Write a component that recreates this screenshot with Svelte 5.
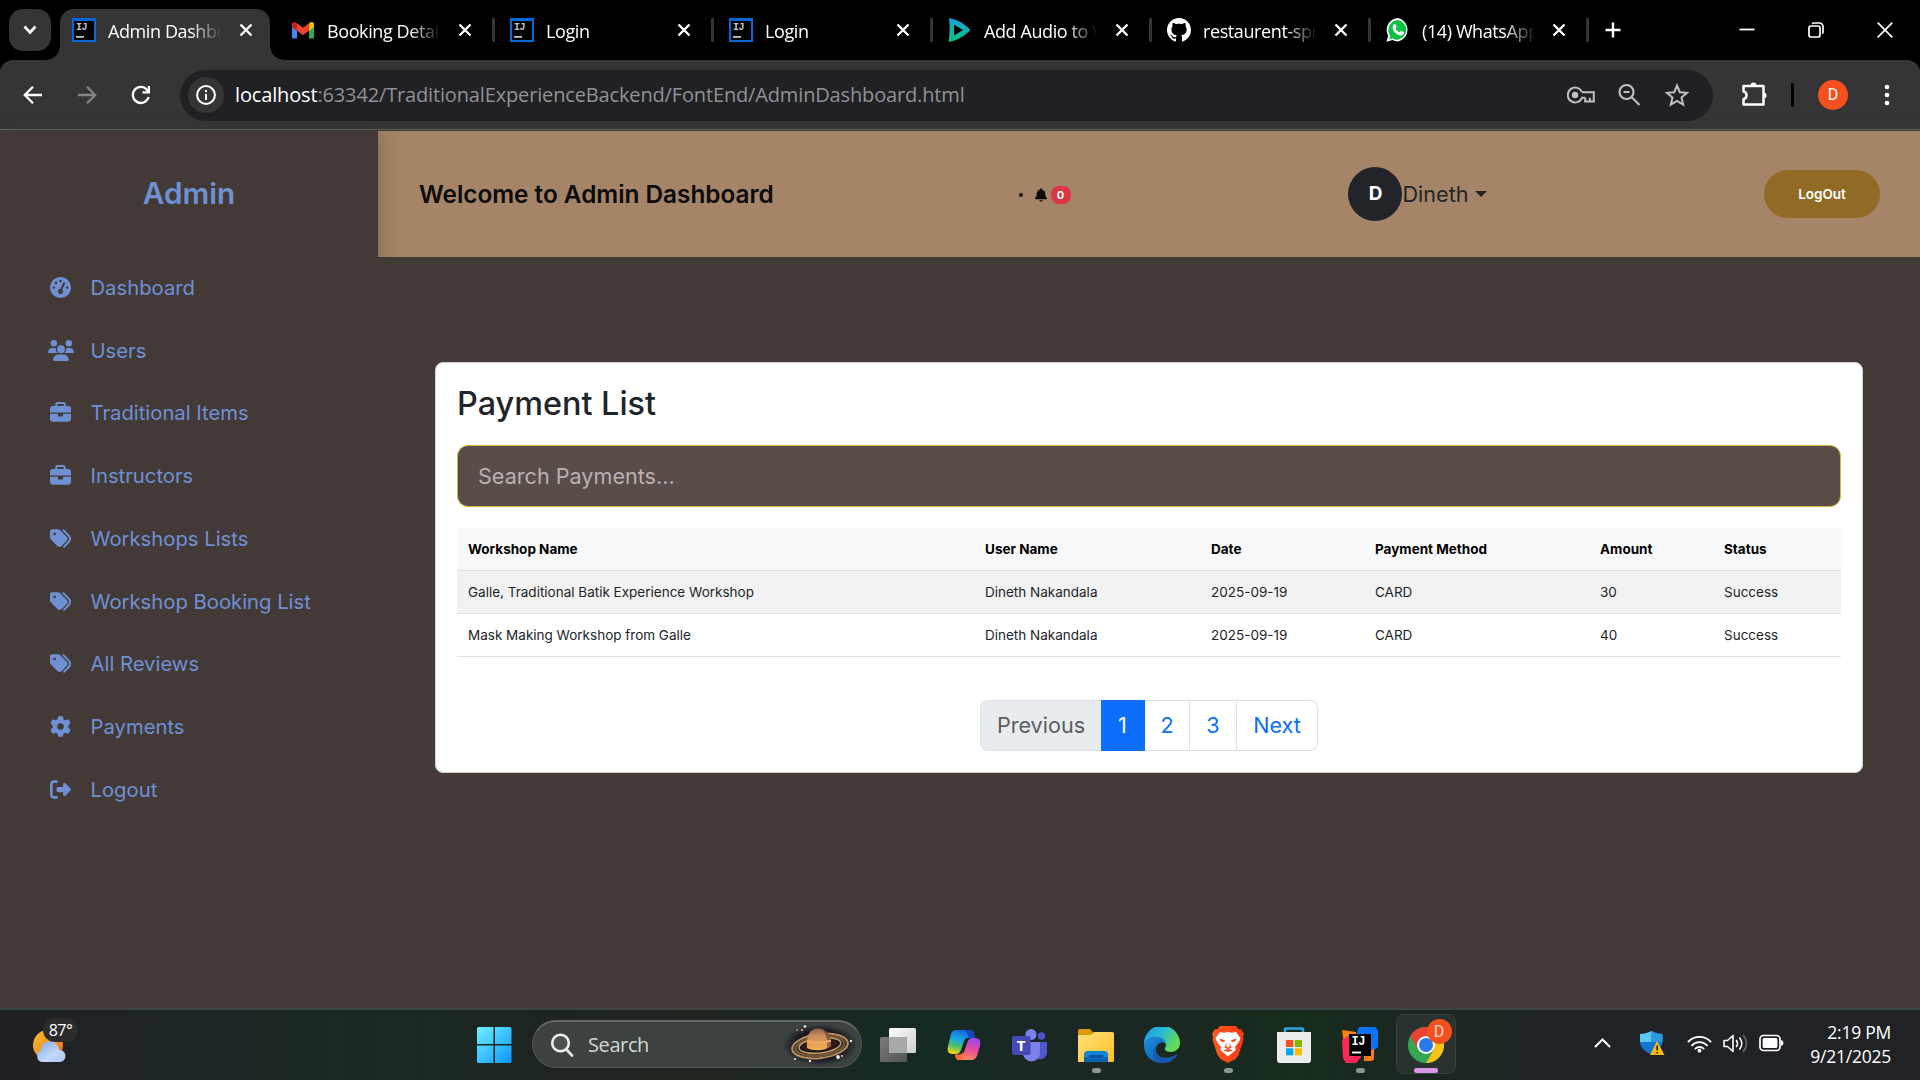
<script>
  const tabs = [
    { icon: 'ij', title: 'Admin Dashbo', active: true },
    { icon: 'gmail', title: 'Booking Detail' },
    { icon: 'ij', title: 'Login' },
    { icon: 'ij', title: 'Login' },
    { icon: 'play', title: 'Add Audio to V' },
    { icon: 'github', title: 'restaurent-spr' },
    { icon: 'whatsapp', title: '(14) WhatsApp' }
  ];

  const gauge = 'M0 256a256 256 0 1 1 512 0A256 256 0 1 1 0 256zM288 96a32 32 0 1 0 -64 0 32 32 0 1 0 64 0zM256 416c35.3 0 64-28.7 64-64c0-17.4-6.9-33.1-18.1-44.6L366 161.7c5.3-12.1-.2-26.3-12.3-31.6s-26.3 .2-31.6 12.3L257.9 288c-.6 0-1.3 0-1.9 0c-35.3 0-64 28.7-64 64s28.7 64 64 64zM176 144a32 32 0 1 0 -64 0 32 32 0 1 0 64 0zM96 288a32 32 0 1 0 0-64 32 32 0 1 0 0 64zm352-32a32 32 0 1 0 -64 0 32 32 0 1 0 64 0z';
  const users = 'M144 0a80 80 0 1 1 0 160A80 80 0 1 1 144 0zM512 0a80 80 0 1 1 0 160A80 80 0 1 1 512 0zM0 298.7C0 239.8 47.8 192 106.7 192h42.7c15.9 0 31 3.5 44.6 9.7c-1.3 7.2-1.9 14.7-1.9 22.3c0 38.2 16.8 72.5 43.3 96c-.2 0-.4 0-.7 0H21.3C9.6 320 0 310.4 0 298.7zM405.3 320c-.2 0-.4 0-.7 0c26.6-23.5 43.3-57.8 43.3-96c0-7.6-.7-15-1.9-22.3c13.6-6.3 28.7-9.7 44.6-9.7h42.7C592.2 192 640 239.8 640 298.7c0 11.8-9.6 21.3-21.3 21.3H405.3zM224 224a96 96 0 1 1 192 0 96 96 0 1 1 -192 0zM128 485.3C128 411.7 187.7 352 261.3 352H378.7C452.3 352 512 411.7 512 485.3c0 14.7-11.9 26.7-26.7 26.7H154.7c-14.7 0-26.7-11.9-26.7-26.7z';
  const briefcase = 'M184 48H328c4.4 0 8 3.6 8 8V96H176V56c0-4.4 3.6-8 8-8zm-56 8V96H64C28.7 96 0 124.7 0 160v96H192 320 512V160c0-35.3-28.7-64-64-64H384V56c0-30.9-25.1-56-56-56H184c-30.9 0-56 25.1-56 56zM512 288H320v32c0 17.7-14.3 32-32 32H224c-17.7 0-32-14.3-32-32V288H0V416c0 35.3 28.7 64 64 64H448c35.3 0 64-28.7 64-64V288z';
  const tags = 'M345 39.1L472.8 168.4c52.4 53 52.4 138.2 0 191.2L360.8 472.9c-9.3 9.4-24.5 9.5-33.9 .2s-9.5-24.5-.2-33.9L438.6 325.9c33.9-34.3 33.9-89.4 0-123.7L310.9 72.9c-9.3-9.4-9.2-24.6 .2-33.9s24.6-9.2 33.9 .2zM0 229.5V80C0 53.5 21.5 32 48 32H197.5c17 0 33.3 6.7 45.3 18.7l168 168c25 25 25 65.5 0 90.5L277.3 442.7c-25 25-65.5 25-90.5 0l-168-168C6.7 262.7 0 246.5 0 229.5zM144 144a32 32 0 1 0 -64 0 32 32 0 1 0 64 0z';
  const gear = 'M495.9 166.6c3.2 8.7 .5 18.4-6.4 24.6l-43.3 39.4c1.1 8.3 1.7 16.8 1.7 25.4s-.6 17.1-1.7 25.4l43.3 39.4c6.9 6.2 9.6 15.9 6.4 24.6c-4.4 11.9-9.7 23.3-15.8 34.3l-4.7 8.1c-6.6 11-14 21.4-22.1 31.2c-5.9 7.2-15.7 9.6-24.5 6.8l-55.7-17.7c-13.4 10.3-28.2 18.9-44 25.4l-12.5 57.1c-2 9.1-9 16.3-18.2 17.8c-13.8 2.3-28 3.5-42.5 3.5s-28.7-1.2-42.5-3.5c-9.2-1.5-16.2-8.7-18.2-17.8l-12.5-57.1c-15.8-6.5-30.6-15.1-44-25.4L83.1 425.9c-8.8 2.8-18.6 .3-24.5-6.8c-8.1-9.8-15.5-20.2-22.1-31.2l-4.7-8.1c-6.1-11-11.4-22.4-15.8-34.3c-3.2-8.7-.5-18.4 6.4-24.6l43.3-39.4C64.6 273.1 64 264.6 64 256s.6-17.1 1.7-25.4L22.4 191.2c-6.9-6.2-9.6-15.9-6.4-24.6c4.4-11.9 9.7-23.3 15.8-34.3l4.7-8.1c6.6-11 14-21.4 22.1-31.2c5.9-7.2 15.7-9.6 24.5-6.8l55.7 17.7c13.4-10.3 28.2-18.9 44-25.4l12.5-57.1c2-9.1 9-16.3 18.2-17.8C227.3 1.2 241.5 0 256 0s28.7 1.2 42.5 3.5c9.2 1.5 16.2 8.7 18.2 17.8l12.5 57.1c15.8 6.5 30.6 15.1 44 25.4l55.7-17.7c8.8-2.8 18.6-.3 24.5 6.8c8.1 9.8 15.5 20.2 22.1 31.2l4.7 8.1c6.1 11 11.4 22.4 15.8 34.3zM256 336a80 80 0 1 0 0-160 80 80 0 1 0 0 160z';
  const exit = 'M377.9 105.9L500.7 228.7c7.2 7.2 11.3 17.1 11.3 27.3s-4.1 20.1-11.3 27.3L377.9 406.1c-6.4 6.4-15 9.9-24 9.9c-18.7 0-33.9-15.2-33.9-33.9l0-62.1-128 0c-17.7 0-32-14.3-32-32l0-64c0-17.7 14.3-32 32-32l128 0 0-62.1c0-18.7 15.2-33.9 33.9-33.9c9 0 17.6 3.6 24 9.9zM160 96L96 96c-17.7 0-32 14.3-32 32l0 256c0 17.7 14.3 32 32 32l64 0c17.7 0 32 14.3 32 32s-14.3 32-32 32l-64 0c-53 0-96-43-96-96L0 128C0 75 43 32 96 32l64 0c17.7 0 32 14.3 32 32s-14.3 32-32 32z';
  const bell = 'M224 0c-17.7 0-32 14.3-32 32V51.2C119 66 64 130.6 64 208v18.8c0 47-17.3 92.4-48.5 127.6l-7.4 8.3c-8.4 9.4-10.4 22.9-5.3 34.4S19.4 416 32 416H416c12.6 0 24-7.4 29.2-18.9s3.1-25-5.3-34.4l-7.4-8.3C401.3 319.2 384 273.9 384 226.8V208c0-77.4-55-142-128-156.8V32c0-17.7-14.3-32-32-32zm45.3 493.3c12-12 18.7-28.3 18.7-45.3H224 160c0 17 6.7 33.3 18.7 45.3s28.3 18.7 45.3 18.7s33.3-6.7 45.3-18.7z';
  const octocat = 'M8 0C3.58 0 0 3.58 0 8c0 3.54 2.29 6.53 5.47 7.59.4.07.55-.17.55-.38 0-.19-.01-.82-.01-1.49-2.01.37-2.53-.49-2.69-.94-.09-.23-.48-.94-.82-1.13-.28-.15-.68-.52-.01-.53.63-.01 1.08.58 1.23.82.72 1.21 1.87.87 2.33.66.07-.52.28-.87.51-1.07-1.78-.2-3.64-.89-3.64-3.95 0-.87.31-1.59.82-2.15-.08-.2-.36-1.02.08-2.12 0 0 .67-.21 2.2.82.64-.18 1.32-.27 2-.27s1.36.09 2 .27c1.53-1.04 2.2-.82 2.2-.82.44 1.1.16 1.92.08 2.12.51.56.82 1.27.82 2.15 0 3.07-1.87 3.75-3.65 3.95.29.25.54.73.54 1.48 0 1.07-.01 1.93-.01 2.2 0 .21.15.46.55.38A8.01 8.01 0 0 0 16 8c0-4.42-3.58-8-8-8z';

  const menu = [
    { label: 'Dashboard', path: gauge },
    { label: 'Users', path: users, wide: true },
    { label: 'Traditional Items', path: briefcase },
    { label: 'Instructors', path: briefcase },
    { label: 'Workshops Lists', path: tags },
    { label: 'Workshop Booking List', path: tags },
    { label: 'All Reviews', path: tags },
    { label: 'Payments', path: gear },
    { label: 'Logout', path: exit }
  ];

  const columns = ['Workshop Name', 'User Name', 'Date', 'Payment Method', 'Amount', 'Status'];
  const payments = [
    ['Galle, Traditional Batik Experience Workshop', 'Dineth Nakandala', '2025-09-19', 'CARD', '30', 'Success'],
    ['Mask Making Workshop from Galle', 'Dineth Nakandala', '2025-09-19', 'CARD', '40', 'Success']
  ];
</script>

<div class="screen">
  <div class="tabstrip">
    <button class="tabsearch" aria-label="Search tabs">
      <svg width="14" height="10" viewBox="0 0 14 10"><path d="M1.5 1.5 7 7.5l5.500-6" fill="none" stroke="#fff" stroke-width="2.600" /></svg>
    </button>
    {#each tabs as tab}
      <div class="tab" class:active={tab.active}>
        <svg class="favicon" width="24" height="24" viewBox="0 0 24 24">
          {#if tab.icon === 'ij'}
            <rect width="24" height="24" fill="#0a67d6" />
            <rect x="2" y="3" width="20" height="19" fill="#000" />
            <text x="4" y="11.500" class="mono" font-size="10">IJ</text>
            <rect x="4" y="18" width="8" height="1.800" fill="#c4c4c4" />
          {:else if tab.icon === 'gmail'}
            <path d="M1 7v12.500Q1 20.500 2 20.500h4V10z" fill="#4285f4" />
            <path d="M23 7v12.500q0 1-1 1h-4V10z" fill="#34a853" />
            <path d="M18 6v7l5-4V6.500C23 3.700 20 3.500 18.500 4.700z" fill="#fbbc04" />
            <path d="M6 6v7L1 9V6.500C1 3.700 4 3.500 5.500 4.700z" fill="#c5221f" />
            <path d="M6 5.200 12 9.700l6-4.500v7.600L12 17.300 6 12.800z" fill="#ea4335" />
          {:else if tab.icon === 'play'}
            <defs><linearGradient id="clip" x1="0" y1="0" x2="0" y2="1"><stop offset="0" stop-color="#16a5dc" /><stop offset="1" stop-color="#06c281" /></linearGradient></defs>
            <path fill-rule="evenodd" d="M1.200 1C.5 .2 1 0 2 .3 10 2 16.500 6 21.500 11c.8.8.8 1.300 0 2C16 18 10 22 2 23.800c-1 .2-1.500-.2-1.200-1 1-7 1-14 .4-21.800zM6 6.500v11l9-5.500z" fill="url(#clip)" />
          {:else if tab.icon === 'github'}
            <path d={octocat} fill="#fff" transform="scale(1.5)" />
          {:else}
            <path d="M12 0a12 12 0 0 1 0 23.500c-2 0-4-.5-5.500-1.400L.5 23.700l1.600-6A12 12 0 0 1 12 0z" fill="#fff" />
            <path d="M12 2a10 10 0 0 1 0 19.700c-2 0-3.700-.5-5.200-1.500l-3.500 1 .9-3.500A10 10 0 0 1 12 2z" fill="#0cc143" />
            <path d="M8 6.200c.6-.5 1.400-.4 1.600.2l.9 2.100c.2.600-.9 1.500-1 1.900.7 1.800 2.200 3 4 3.800.5 0 1.300-1.500 1.800-1.300l2.300 1.100c.5.400.3 1.400-.2 2.200-2 2-5 1.400-8-1.200C6.700 12.400 5.500 8.600 8 6.200z" fill="#fff" />
          {/if}
        </svg>
        <span class="title">{tab.title}</span>
        <svg class="close" width="14" height="14" viewBox="0 0 14 14"><path d="M1.500 1.500l11 11M12.500 1.500l-11 11" stroke="#fff" stroke-width="2.400" /></svg>
      </div>
    {/each}
    <svg class="plus" width="16" height="16" viewBox="0 0 16 16"><path d="M8 .5v15M.5 8h15" stroke="#fff" stroke-width="2.400" /></svg>
    <div class="winctl">
      <svg width="16" height="16" viewBox="0 0 16 16"><path d="M.5 7.500h15" stroke="#fff" stroke-width="1.800" /></svg>
      <svg width="16" height="16" viewBox="0 0 16 16"><g fill="none" stroke="#fff" stroke-width="1.700"><rect x="1" y="4" width="11" height="11" rx="2" /><path d="M4 1.500Q5 1 6 1h5.500A3.500 3.500 0 0 1 15 4.500V10q0 1-.7 1.800" /></g></svg>
      <svg width="16" height="16" viewBox="0 0 16 16"><path d="M.7.7l14.600 14.600M15.300.7.7 15.300" stroke="#fff" stroke-width="1.700" /></svg>
    </div>
  </div>

  <div class="toolbar">
    <div class="bar">
      <svg class="nav" width="20" height="20" viewBox="0 0 20 20"><path d="M19 10H2.500M10 1.800 1.800 10l8.200 8.200" fill="none" stroke="#fff" stroke-width="2.300" /></svg>
      <svg class="nav" width="20" height="20" viewBox="0 0 20 20"><path d="M1 10h16.500M10 1.800l8.200 8.200-8.200 8.200" fill="none" stroke="#868686" stroke-width="2.300" /></svg>
      <svg class="nav" width="20" height="20" viewBox="0 0 20 20"><path d="M17.600 12a8 8 0 1 1-1.700-7.300L18 7" fill="none" stroke="#fff" stroke-width="2.300" /><path d="M19 1v7.500h-7.500V6.300h5.300V1z" fill="#fff" /></svg>
      <div class="omnibox">
        <span class="info"><svg width="20" height="20" viewBox="0 0 20 20"><circle cx="10" cy="10" r="8.900" fill="none" stroke="#fff" stroke-width="2" /><path d="M10 9v6M10 5v2.200" stroke="#fff" stroke-width="2" /></svg></span>
        <span class="url"><b>localhost</b>:63342/TraditionalExperienceBackend/FontEnd/AdminDashboard.html</span>
        <svg class="key" width="28" height="18" viewBox="0 0 28 18"><g fill="none" stroke="#c0c0c3" stroke-width="2"><path d="M15 6.200A7.400 7.400 0 1 0 15 11.800h3.200M15 6.200h11.800v9.200h-4v-3.600M18.200 11.800v3.600h4.600" /></g><circle cx="8" cy="9" r="3.200" fill="#c0c0c3" /></svg>
        <svg width="24" height="24" viewBox="0 0 24 24"><g fill="none" stroke="#c0c0c3" stroke-width="2.100"><circle cx="8.500" cy="9" r="7" /><path d="M13.500 14l8 8M5.500 9h6" /></g></svg>
        <svg width="24" height="24" viewBox="0 0 24 24"><path d="M12 2.500l2.800 6.700 7.200.6-5.500 4.800 1.700 7L12 17.900l-6.200 3.700 1.700-7L2 9.800l7.200-.6z" fill="none" stroke="#c0c0c3" stroke-width="2" /></svg>
      </div>
      <svg class="puzzle" width="26" height="26" viewBox="0 0 26 26"><path d="M2.500 4h20v18.500h-20V17c4-.5 4-7 0-7.500z" fill="none" stroke="#fff" stroke-width="2.500" stroke-linejoin="round" /><path d="M9.500 3.500a3 3 0 0 1 6 0zM22.500 10.500a3 3 0 0 1 0 6z" fill="#fff" /></svg>
      <i class="vsep"></i>
      <span class="profile">D</span>
      <svg class="dots" width="6" height="22" viewBox="0 0 6 22"><g fill="#fff"><circle cx="3" cy="3" r="2.300" /><circle cx="3" cy="11" r="2.300" /><circle cx="3" cy="19" r="2.300" /></g></svg>
    </div>
  </div>

  <div class="page">
    <aside>
      <h1>Admin</h1>
      <nav>
        {#each menu as item}
          <a href="#top">
            <svg width={item.wide ? 26 : 21} height="21" viewBox={item.wide ? '0 0 640 512' : '0 0 512 512'}><path d={item.path} fill="#6f91d4" /></svg>
            <span>{item.label}</span>
          </a>
        {/each}
      </nav>
    </aside>
    <main>
      <header>
        <h2>Welcome to Admin Dashboard</h2>
        <div class="notify">
          <i></i>
          <svg width="12" height="14" viewBox="0 0 448 512"><path d={bell} fill="#0b0b0b" /></svg>
          <span>0</span>
        </div>
        <div class="user"><b>D</b><span>Dineth</span><i></i></div>
        <button class="logout">LogOut</button>
      </header>
      <section class="card">
        <h3>Payment List</h3>
        <div class="search">Search Payments...</div>
        <table>
          <thead><tr>{#each columns as column}<th>{column}</th>{/each}</tr></thead>
          <tbody>
            {#each payments as row}
              <tr>{#each row as cell}<td>{cell}</td>{/each}</tr>
            {/each}
          </tbody>
        </table>
        <div class="pager">
          <span class="prev">Previous</span><span class="current">1</span><span>2</span><span>3</span><span class="next">Next</span>
        </div>
      </section>
    </main>
  </div>

  <footer class="taskbar">
    <div class="weather">
      <svg width="36" height="36" viewBox="0 0 36 36">
        <defs>
          <linearGradient id="sun" x1="0" y1="0" x2="1" y2="1"><stop offset="0" stop-color="#f2c230" /><stop offset="1" stop-color="#f06a10" /></linearGradient>
          <linearGradient id="cloud" x1="0" y1="0" x2="1" y2="1"><stop offset="0" stop-color="#7ba4ee" /><stop offset=".6" stop-color="#c3d8fa" /><stop offset="1" stop-color="#a9c4f3" /></linearGradient>
        </defs>
        <circle cx="16" cy="17" r="15" fill="url(#sun)" />
        <path d="M10 34a6 6 0 0 1-1-11.500 9 9 0 0 1 18-.5A6 6 0 0 1 28 34z" fill="url(#cloud)" />
      </svg>
      <span>87°</span>
    </div>
    <svg class="start" width="35" height="36" viewBox="0 0 35 36">
      <defs><linearGradient id="win" x1="0" y1="0" x2="1" y2="1" gradientUnits="objectBoundingBox"><stop offset="0" stop-color="#6ff0ff" /><stop offset="1" stop-color="#0a96ff" /></linearGradient></defs>
      <path d="M1.500 0H16.500V17H0V1.500Q0 0 1.500 0zM18 0h15q1.500 0 1.500 1.500V17H18zM0 18.500h16.500V36h-15Q0 36 0 34.500zM18 18.500h16.500v16q0 1.500-1.500 1.500H18z" fill="url(#win)" />
    </svg>
    <div class="find">
      <svg width="24" height="24" viewBox="0 0 24 24"><circle cx="10.500" cy="10" r="8.300" fill="#6b7270" fill-opacity=".35" stroke="#eee" stroke-width="2.600" /><path d="M16.500 16.500l5.500 6" stroke="#e4e4e4" stroke-width="2.800" stroke-linecap="round" /></svg>
      <span>Search</span>
      <svg class="saturn" width="76" height="42" viewBox="0 0 76 42">
        <defs>
          <radialGradient id="space"><stop offset=".65" stop-color="#171320" /><stop offset="1" stop-color="#171320" stop-opacity="0" /></radialGradient>
          <linearGradient id="planet" x1="0" y1="0" x2="0" y2="1"><stop offset="0" stop-color="#8b624c" /><stop offset=".3" stop-color="#c48a62" /><stop offset=".65" stop-color="#e39a50" /><stop offset="1" stop-color="#f0b25a" /></linearGradient>
        </defs>
        <ellipse cx="38" cy="21" rx="37" ry="21" fill="url(#space)" />
        <g transform="rotate(-7 38 22)" fill="none">
          <ellipse cx="38" cy="22" rx="28" ry="12" stroke="#b8935c" stroke-width="2" />
          <ellipse cx="38" cy="22" rx="24.500" ry="9.500" stroke="#6e5439" stroke-width="3" />
          <ellipse cx="38" cy="21.500" rx="21" ry="7.500" stroke="#c29a60" stroke-width="1.600" />
          <ellipse cx="38" cy="21" rx="18" ry="6" fill="#2b1d1b" />
        </g>
        <path d="M25 24C24 11 28 4.500 36 4.500S49 11 49 22c-6 5-17 5.500-24 2z" fill="url(#planet)" />
        <path d="M40 5c7 1 9 9 9 17l-4 2.200C46 16 44 9 40 5z" fill="#6e3d31" opacity=".65" />
        <path d="M25.500 17.500q12 3 23.500-1" stroke="#f0ad68" stroke-width="2" fill="none" />
        <g fill="#f6edd8"><circle cx="23" cy="2.500" r="1.300" /><circle cx="20" cy="6" r=".9" /><circle cx="15" cy="6" r=".8" /><circle cx="69" cy="17" r="1.200" /><circle cx="56" cy="33" r="1.900" /><circle cx="28" cy="37" r="1.200" /><circle cx="13" cy="35" r="1" /><circle cx="60" cy="32" r=".9" /></g>
      </svg>
    </div>

    <div class="apps">
      <span class="app"><svg width="36" height="36" viewBox="0 0 36 36">
        <defs><linearGradient id="tv1" x1="0" y1="0" x2="1" y2="1"><stop stop-color="#fff" /><stop offset="1" stop-color="#ccc" /></linearGradient><linearGradient id="tv2" x1="0" y1="0" x2="1" y2="1"><stop stop-color="#7b7b7b" /><stop offset="1" stop-color="#535555" /></linearGradient></defs>
        <rect x="0" y="10" width="27" height="25" rx="1.500" fill="url(#tv2)" /><rect x="9" y="1" width="27" height="25" rx="1.500" fill="url(#tv1)" /><path d="M9 10h18v16H10.500Q9 26 9 24.500z" fill="#a7a8a8" />
      </svg></span>
      <span class="app"><svg width="36" height="36" viewBox="0 0 36 36">
        <defs><linearGradient id="cp1" x1=".6" y1="0" x2=".3" y2="1"><stop stop-color="#1a5fe0" /><stop offset=".4" stop-color="#18a6e8" /><stop offset=".7" stop-color="#4cc06a" /><stop offset="1" stop-color="#f5d70a" /></linearGradient><linearGradient id="cp2" x1=".6" y1="0" x2=".3" y2="1"><stop stop-color="#9a48ee" /><stop offset=".5" stop-color="#ec4b9a" /><stop offset="1" stop-color="#ff9350" /></linearGradient></defs>
        <path d="M10 3h14q3 0 4 4l1 4h-7q-3 0-4 3l-3 9q-1.500 4-5 4H6q-6-1-4-8l3-12q1.500-4 5-4z" fill="url(#cp1)" />
        <path d="M17 3h7q3 0 4 4l1 4h-6l-2-4Q20 3 17 3z" fill="#144ac0" />
        <path d="M26 33H13q-3 0-4-5h5q3 0 4-3l3.500-10q1.500-4 5-4h4q5 1 3.500 8l-3 10q-2 4-5 4z" fill="url(#cp2)" />
        <path d="M9 27.500h4q3 0 4-3l-.5 5Q16 33 18 33h-5q-3 0-4-5.500z" fill="#ff6a3a" />
      </svg></span>
      <span class="app"><svg width="36" height="36" viewBox="0 0 36 36">
        <circle cx="29.500" cy="9" r="3.800" fill="#4f55c4" /><circle cx="19" cy="7.500" r="5.500" fill="#7b83eb" /><path d="M24 15h11v11a7 7 0 0 1-11 5z" fill="#4f58cb" /><path d="M11 15h17v11a8.500 8.500 0 0 1-17 0z" fill="#7b83eb" /><path d="M14 9h5v19h-8z" fill="#41469e" opacity=".5" /><rect x="0" y="9" width="18" height="19" rx="2" fill="#4549b8" /><text x="9" y="24" class="teams">T</text>
      </svg></span>
      <span class="app running"><svg width="36" height="36" viewBox="0 0 36 36">
        <defs><linearGradient id="fold" x1="0" y1="0" x2="1" y2="1"><stop stop-color="#ffe07b" /><stop offset="1" stop-color="#fdbf29" /></linearGradient></defs>
        <path d="M0 3.500Q0 2 1.500 2H12l3.500 4H34v10H0z" fill="#dc9a07" /><path d="M0 8h13l3-3h18.500Q36 5 36 6.500V34q0 1-1 1H0z" fill="url(#fold)" /><path d="M6 35V28q0-4 4-4h16q4 0 4 4v7z" fill="#1384d8" /><path d="M6 35v-5h24v5z" fill="#0a63b4" /><path d="M11 29h14" stroke="#0b4f97" stroke-width="2" />
      </svg></span>
      <span class="app"><svg width="36" height="36" viewBox="0 0 36 36">
        <defs><linearGradient id="e1" x1="0" y1="0" x2="1" y2=".5"><stop stop-color="#1b9be6" /><stop offset=".5" stop-color="#2bb9d8" /><stop offset="1" stop-color="#62dc50" /></linearGradient><linearGradient id="e2" x1="0" y1="0" x2="1" y2="1"><stop stop-color="#1f90dc" /><stop offset="1" stop-color="#0b4fa3" /></linearGradient></defs>
        <path d="M0 17A18 18 0 0 1 36 16c0 6-5 9-9 9-5 0-7-2-6-4 2-3 1-7-4-8C10 11 3 13 0 17z" fill="url(#e1)" />
        <path d="M0 18C1 12 6 9.500 11 9.500c7 0 11 4 11 8-1-3-9-3-10 4-1 9 10 13 22 5-3 6-9 9.500-16 9.500C7 36 0 28 0 18z" fill="url(#e2)" />
        <path d="M12 18c-3 7 2 14 9 14 5 0 9-2 12-4-3 5-8 8-14 8C9 35 7 24 12 18z" fill="#1557b0" />
      </svg></span>
      <span class="app running"><svg width="32" height="37" viewBox="0 0 32 37">
        <defs><linearGradient id="brave" x1="0" y1="0" x2="1" y2="0"><stop stop-color="#ff5a1f" /><stop offset="1" stop-color="#fb3515" /></linearGradient></defs>
        <path d="M8 0h16l3 3.500 2-.5 3 5-1 3 .5 3-5 15-3 4L16 37 8.500 33l-3-4-5-15L1 11 0 8l3-5 2 .5z" fill="url(#brave)" />
        <path d="M8 6l4 .8L16 6l4 .8L24 6l4.500 6-1 3-4.500 6 .8 3-4.300 3.500-3.500 3-3.500-3L8.200 24 9 21l-4.500-6-1-3z" fill="#fff" />
        <path d="M7 12.500l6 1.700-.7 2-3.300-.7zM25 12.500l-6 1.700.7 2 3.300-.7zM14.500 16l-2 5.500 3.500 2 3.500-2-2-5.500.3 4.500-1.800 1-1.800-1zM11 24.500l5-1.800 5 1.800-5 1.500z" fill="#f94a22" />
      </svg></span>
      <span class="app"><svg width="36" height="36" viewBox="0 0 36 36">
        <path d="M9 8V2.500Q9 1.500 10 1.500h16q1 0 1 1V8" fill="none" stroke="#28a8ea" stroke-width="2.500" /><path d="M1 5h34v28q0 3-3 3H4q-3 0-3-3z" fill="#ececec" /><path d="M10 13h7.300v7H10z" fill="#f25022" /><path d="M18.700 13H26v7h-7.300z" fill="#7fba00" /><path d="M10 21.300h7.300v7H10z" fill="#00a4ef" /><path d="M18.700 21.300H26v7h-7.300z" fill="#ffb900" />
      </svg></span>
      <span class="app running"><svg width="36" height="36" viewBox="0 0 36 36">
        <path d="M0 3l14 2v14L3 24z" fill="#fc801d" /><path d="M17 0h16l3 3v17L25 28 14 8z" fill="#0a73f5" /><path d="M0 13l10-6 9 23-5 6H4l-3-5z" fill="#fe2857" /><path d="M22 26l10-4v10l-2 2h-8z" fill="#fc7a1d" /><rect x="7" y="7" width="22" height="22" fill="#000" /><text x="9.500" y="18" class="mono big" font-size="12">IJ</text><path d="M10 25.500h9" stroke="#fff" stroke-width="1.800" />
      </svg></span>
      <span class="app running chrome"><svg width="36" height="36" viewBox="0 0 36 36">
        <circle cx="18" cy="18" r="18" fill="#34a853" /><path d="M2.400 9A18 18 0 0 1 33.600 9H18L10 22.500z" fill="#ea4335" /><path d="M33.600 9A18 18 0 0 1 18 36l8-13.500V9z" fill="#fbc116" /><circle cx="18" cy="18" r="9" fill="#fff" /><circle cx="18" cy="18" r="7" fill="#2b78ee" />
      </svg><b>D</b></span>
    </div>

    <div class="tray">
      <svg class="chev" width="17" height="10" viewBox="0 0 17 10"><path d="M1 9l7.500-7.500L16 9" fill="none" stroke="#fff" stroke-width="2" /></svg>
      <svg class="shield" width="25" height="26" viewBox="0 0 25 26">
        <path d="M11.500 1c3.500 2 7 3 11 3v7c0 7-5 11-11 13.500C5.500 22 0 18 0 11V4c4 0 8-1 11.500-3z" fill="#1473cf" /><path d="M11.500 1v11H0V4c4 0 8-1 11.500-3z" fill="#58c8f2" /><path d="M11.500 1c3.500 2 7 3 11 3v8h-11z" fill="#2c98e0" /><path d="M17 11l7.500 14H10z" fill="#fdb913" /><path d="M17.200 15.500v5M17.200 22v1.500" stroke="#222" stroke-width="1.600" />
      </svg>
      <svg class="wifi" width="25" height="19" viewBox="0 0 25 19"><g fill="none" stroke="#fff" stroke-width="1.900" stroke-linecap="round"><path d="M1.500 7.500a15.500 15.500 0 0 1 22 0M5 11.300a10.500 10.500 0 0 1 15 0M8.400 14.600a6 6 0 0 1 8.200 0" /></g><circle cx="12.500" cy="16.700" r="1.900" fill="#fff" /></svg>
      <svg class="sound" width="25" height="19" viewBox="0 0 25 19"><g fill="none" stroke="#fff" stroke-width="1.600" stroke-linecap="round" stroke-linejoin="round"><path d="M1 6.500h3.500L10 1.500v16l-5.500-5H1z" /><path d="M13.500 6.500q2 3 0 6M16.800 4q4 5.500 0 11" /><path d="M20.500 1.500q6 8 0 16" stroke="#66696a" /></g></svg>
      <svg class="battery" width="25" height="18" viewBox="0 0 25 18"><rect x="1" y="1.500" width="20" height="15" rx="3.500" fill="none" stroke="#fff" stroke-width="1.700" /><rect x="3.600" y="4" width="14.800" height="10" rx="1.500" fill="#fff" /><path d="M22 6q2.500.5 2.500 3T22 12z" fill="#fff" /></svg>
      <div class="clock"><span>2:19 PM</span><span>9/21/2025</span></div>
    </div>
  </footer>
</div>

<style>
  :global(body) { margin: 0; overflow: hidden; background: #433a38; }
  .screen {
    width: 1920px; height: 1080px; display: flex; flex-direction: column; overflow: hidden;
    font-family: Inter, "Liberation Sans", sans-serif;
  }
  svg { display: block; flex: none; }
  button { border: 0; padding: 0; font: inherit; }

  /* Browser window */
  .tabstrip { height: 60px; background: #000; display: flex; padding-left: 9px; box-sizing: border-box; flex: none; font-family: "Open Sans", sans-serif; }
  .tabsearch { width: 42px; height: 42px; margin: 9px 9px 0 0; border-radius: 14px; background: #353535; display: grid; place-items: center; flex: none; }
  .tab { position: relative; width: 219px; height: 60px; box-sizing: border-box; padding: 9px 0 9px 12px; display: flex; align-items: center; flex: none; }
  .tab:not(.active)::after { content: ""; position: absolute; left: 213px; top: 18px; width: 3px; height: 24px; background: #353535; border-radius: 1px; }
  .tab:nth-last-of-type(2) { width: 218px; }
  .tab:nth-last-of-type(2)::after { left: 212px; }
  .tab:nth-last-of-type(2) .title { margin-right: 18px; }
  .tab.active { width: 210px; height: 51px; margin: 9px 9px 0 0; padding: 0 0 9px 12px; background: #353535; border-radius: 14px 14px 0 0; }
  .tab.active::before, .tab.active::after { content: ""; position: absolute; bottom: 0; width: 14px; height: 14px; }
  .tab.active::before { left: -14px; background: radial-gradient(circle at 0 0, transparent 13.500px, #353535 14px); }
  .tab.active::after { right: -14px; background: radial-gradient(circle at 100% 0, transparent 13.500px, #353535 14px); }
  .title {
    width: 112px; margin: 2px 19px 0 12px; white-space: nowrap; font-size: 18px; line-height: 26px; letter-spacing: -.4px; color: #fff;
    mask-image: linear-gradient(90deg, #000 82px, transparent 114px);
  }
  .mono { font-family: "Liberation Mono", monospace; font-weight: 700; fill: #c4c4c4; letter-spacing: -.5px; }
  .big { fill: #fff; }
  .plus { margin: 22px 0 0 13px; }
  .winctl { margin: 22px 27px 0 auto; display: flex; gap: 53px; }

  .toolbar { height: 71px; background: #000; flex: none; }
  .bar { height: 71px; box-sizing: border-box; border-bottom: 1px solid #35363a; box-shadow: inset 0 -1px #6a6a6a; background: #353535; border-radius: 13px 13px 0 0; display: flex; align-items: center; padding-left: 23px; }
  .nav { margin-right: 34px; }
  .omnibox { width: 1533px; height: 51px; margin-left: -5px; box-sizing: border-box; border-radius: 26px; background: #202124; display: flex; align-items: center; padding: 0 24px 0 8px; flex: none; }
  .info { width: 36px; height: 36px; border-radius: 50%; background: #353535; display: grid; place-items: center; margin-right: 11px; }
  .url { flex: 1; font: 20px/30px "Open Sans", sans-serif; letter-spacing: -.15px; color: #919295; white-space: nowrap; }
  .url b { font-weight: 400; color: #fff; }
  .omnibox svg + svg { margin-left: 23px; }
  .puzzle { margin-left: 28px; }
  .vsep { width: 3px; height: 24px; margin-left: 24px; background: #000; border-radius: 1px; }
  .profile { width: 30px; height: 30px; margin-left: 24px; border-radius: 50%; background: #f4511e; color: #fff; font: 16px/30px Roboto, sans-serif; text-align: center; }
  .dots { margin-left: 36px; }

  /* Web page */
  .page { flex: 1; display: flex; background: #443b39; }
  aside { width: 378px; flex: none; background: #433a38; box-shadow: 3px 0 16px rgba(56, 62, 48, .3); position: relative; z-index: 1; }
  h1 { margin: 42px 0 0; font-size: 29.700px; line-height: 40px; font-weight: 600; color: #6f91d4; text-align: center; }
  nav { margin-top: 43px; }
  nav a { display: flex; align-items: center; height: 62.750px; color: #6f91d4; text-decoration: none; font-size: 20.250px; }
  nav svg { margin-left: 50px; margin-right: 19.500px; }
  nav svg[width="26"] { margin-left: 47.500px; margin-right: 17px; }
  main { flex: 1; display: flex; flex-direction: column; }
  header { height: 126px; background: #a58467; display: flex; align-items: center; box-shadow: 0 2px 14px rgba(60, 65, 50, .7); flex: none; }
  h2 { width: 602px; margin: -1px 0 0 41px; font-size: 24.300px; font-weight: 600; color: #0b0b0b; white-space: nowrap; }
  .notify { display: flex; align-items: center; margin-top: 2px; width: 327px; }
  .notify i { width: 4px; height: 4px; border-radius: 50%; background: #0b0b0b; margin: 0 11.500px 0 -2px; }
  .notify span { width: 20px; height: 18px; margin-left: 4px; border-radius: 8px; background: #dc3545; color: #fff; font-size: 11px; font-weight: 700; line-height: 18px; text-align: center; }
  .user { display: flex; align-items: center; width: 416px; color: #212529; font-size: 21.600px; }
  .user b { width: 54px; height: 54px; border-radius: 50%; background: #212529; color: #fff; font-size: 19px; line-height: 53px; text-align: center; margin-right: .5px; text-indent: 1px; }
  .user i { border: 6px solid transparent; border-top-color: #212529; border-bottom: 0; margin-left: 6px; }
  .logout { width: 116px; height: 48px; border-radius: 24px; background: #916a26; color: #fff; font-size: 13.500px; font-weight: 600; }

  .card { width: 1428px; height: 411px; box-sizing: border-box; margin: 105px 0 0 57px; padding: 0 21px; border: 1px solid #d2d2d2; border-radius: 8px; background: #fff; color: #212529; display: flex; flex-direction: column; align-items: stretch; }
  h3 { margin: 21px 0 21px; font-size: 32.400px; line-height: 40px; font-weight: 500; }
  .search { height: 62px; box-sizing: border-box; border: 1px solid #dbb23c; border-radius: 11px; background: #594d4a; color: #b8b2b0; font-size: 21.600px; line-height: 60px; padding-left: 20px; flex: none; }
  table { margin-top: 21px; width: 1384px; border-collapse: separate; border-spacing: 0; table-layout: fixed; font-size: 13.500px; }
  th, td { height: 43px; box-sizing: border-box; padding: 0 0 0 11px; text-align: left; border-bottom: 1px solid #dee2e6; }
  th { background: #f8f9fa; color: #000; font-weight: 650; }
  tbody tr:first-child td { background: #f2f2f2; }
  th:nth-child(1) { width: 517px; }
  th:nth-child(2) { width: 226px; }
  th:nth-child(3) { width: 164px; }
  th:nth-child(4) { width: 225px; }
  th:nth-child(5) { width: 124px; }
  .pager { margin: 43px auto 0; height: 51px; display: flex; font-size: 21.600px; line-height: 49px; color: #0d6efd; }
  .pager span { box-sizing: border-box; height: 51px; border: 1px solid #dee2e6; border-left-width: 0; width: 45px; text-align: center; }
  .pager .prev { width: 121px; border-left-width: 1px; background: #e9ecef; color: #595d61; border-radius: 8px 0 0 8px; border-right: 0; }
  .pager .current { width: 44px; background: #0d6efd; border-color: #0d6efd; color: #fff; }
  .pager span:nth-child(4) { width: 47px; }
  .pager .next { width: 81px; border-radius: 0 8px 8px 0; }

  /* Desktop taskbar */
  .taskbar {
    position: relative; z-index: 2; height: 72px; box-sizing: border-box; border-top: 2px solid #3b4644; display: flex; flex: none; font-family: "Open Sans", sans-serif;
    background: linear-gradient(90deg, #212124 0, #1f2226 90px, #1c2526 200px, #1a2924 400px, #1d2521 520px, #20241f 700px, #152a23 920px, #1b2725 1040px, #1b2723 1140px, #172c1c 1300px, #1a2820 1370px, #1f2326 1560px, #212226 100%);
  }
  .weather { position: relative; width: 50px; margin: 18px 0 0 32px; }
  .weather span { position: absolute; left: 11px; top: -10px; width: 35px; height: 24px; border-radius: 12px; background: #2c2c2d; color: #fff; font-size: 16px; letter-spacing: -.6px; line-height: 24px; text-align: center; }
  .start { margin: 17px 0 0 395px; }
  .find { width: 330px; height: 48px; box-sizing: border-box; margin: 10px 0 0 20px; border: 1px solid #505756; border-top: 2px solid #626867; border-radius: 24px; background: #3b4240; display: flex; align-items: center; padding-left: 17px; color: #d4d7d6; font-size: 20px; letter-spacing: -.4px; }
  .find span { margin: 0 auto 0 14px; }
  .saturn { margin-right: 3px; }
  .apps { display: flex; margin: 4px 0 0 5.500px; height: 60px; }
  .app { position: relative; width: 60px; height: 60px; margin-right: 6px; display: grid; place-items: center; flex: none; }
  .app svg { margin-top: 1px; }
  .running::after { content: ""; position: absolute; left: 26px; bottom: 1px; width: 9px; height: 5px; border-radius: 3px; background: #8f9695; }
  .teams { fill: #fff; font-family: "Open Sans", sans-serif; font-size: 15px; font-weight: 700; text-anchor: middle; }
  .chrome { box-sizing: border-box; border: 1px solid #36413d; border-radius: 7px; background: #29322f; margin-right: 0; }
  .chrome b { position: absolute; left: 30px; top: 4px; width: 25px; height: 25px; border-radius: 50%; background: #f4511e; color: #ffd9c8; font: 16px/25px Roboto, sans-serif; text-align: center; }
  .chrome::after { left: 17px; bottom: 0; width: 24px; background: #d998e6; }
  .tray { margin: 0 29px 0 auto; display: flex; align-items: center; height: 66px; }
  .chev { margin-right: 29px; }
  .shield { margin-right: 22px; }
  .wifi { margin-right: 11px; }
  .sound { margin-right: 11px; }
  .battery { margin-right: 25px; }
  .clock { width: 82px; display: flex; flex-direction: column; text-align: right; color: #fff; font-size: 17.500px; line-height: 24px; letter-spacing: -.25px; white-space: nowrap; margin-top: 1px; }
</style>
